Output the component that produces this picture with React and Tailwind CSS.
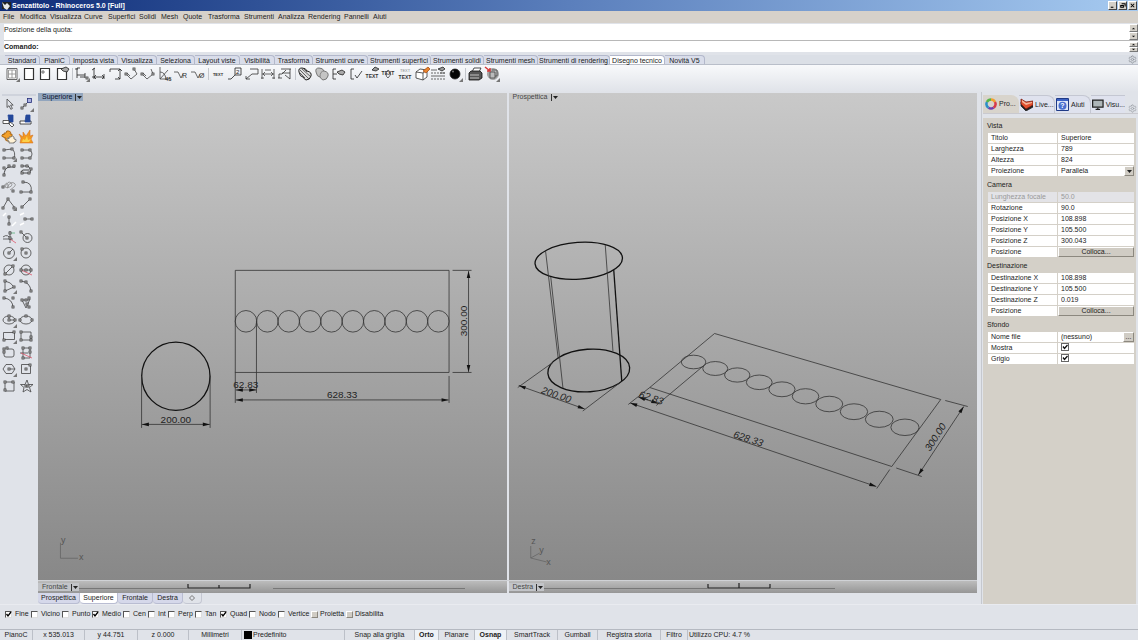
import React, { useState } from 'react';
import clsx from 'clsx';
import { Settings } from 'lucide-react';

const MENUS = [
  ['File', 'w-[17px]'], ['Modifica', 'w-[30px]'], ['Visualizza', 'w-[34px]'], ['Curve', 'w-[24px]'],
  ['Superfici', 'w-[31px]'], ['Solidi', 'w-[22px]'], ['Mesh', 'w-[22px]'], ['Quote', 'w-[25px]'],
  ['Trasforma', 'w-[36px]'], ['Strumenti', 'w-[34px]'], ['Analizza', 'w-[30px]'], ['Rendering', 'w-[36px]'],
  ['Pannelli', 'w-[29px]'], ['Aiuti', 'w-[18px]'],
];

const TOOL_TABS = [
  ['Standard', 'w-[35px]'], ['PianiC', 'w-[30px]'], ['Imposta vista', 'w-[48px]'], ['Visualizza', 'w-[39px]'],
  ['Seleziona', 'w-[38px]'], ['Layout viste', 'w-[45px]'], ['Visibilità', 'w-[35px]'], ['Trasforma', 'w-[38px]'],
  ['Strumenti curve', 'w-[55px]'], ['Strumenti superfici', 'w-[63px]'], ['Strumenti solidi', 'w-[53px]'],
  ['Strumenti mesh', 'w-[54px]'], ['Strumenti di rendering', 'w-[72px]'], ['Disegno tecnico', 'w-[55px]'],
  ['Novità V5', 'w-[40px]'],
];

const VIEW_TABS = [
  ['Prospettica', 'w-[42px]'], ['Superiore', 'w-[38px]'], ['Frontale', 'w-[35px]'], ['Destra', 'w-[30px]'],
];

const OSNAPS = [
  ['Fine', true, 'w-[26px]'], ['Vicino', false, 'w-[31px]'], ['Punto', false, 'w-[30px]'],
  ['Medio', true, 'w-[31px]'], ['Cen', false, 'w-[25px]'], ['Int', false, 'w-[20px]'],
  ['Perp', false, 'w-[27px]'], ['Tan', false, 'w-[25px]'], ['Quad', true, 'w-[29px]'],
  ['Nodo', false, 'w-[29px]'], ['Vertice', false, 'w-[33px]'],
];

const STATUS = [
  ['PianoC', 'w-[33px]'], ['x 535.013', 'w-[52px]'], ['y 44.751', 'w-[53px]'], ['z 0.000', 'w-[51px]'],
  ['Millimetri', 'w-[53px]'],
];

const MODES = [
  ['Snap alla griglia', 'w-[70px]'], ['Orto', 'w-[24px]', true], ['Planare', 'w-[36px]'], ['Osnap', 'w-[32px]', true],
  ['SmartTrack', 'w-[51px]'], ['Gumball', 'w-[40px]'], ['Registra storia', 'w-[63px]'], ['Filtro', 'w-[27px]'],
];

const PROPS = [
  { title: 'Vista', rows: [
    ['Titolo', 'Superiore'], ['Larghezza', '789'], ['Altezza', '824'], ['Proiezione', 'Parallela', 'select'],
  ] },
  { title: 'Camera', rows: [
    ['Lunghezza focale', '50.0', 'disabled'], ['Rotazione', '90.0'], ['Posizione X', '108.898'],
    ['Posizione Y', '105.500'], ['Posizione Z', '300.043'], ['Posizione', 'Colloca...', 'button'],
  ] },
  { title: 'Destinazione', rows: [
    ['Destinazione X', '108.898'], ['Destinazione Y', '105.500'], ['Destinazione Z', '0.019'],
    ['Posizione', 'Colloca...', 'button'],
  ] },
  { title: 'Sfondo', rows: [
    ['Nome file', '(nessuno)', 'file'], ['Mostra', '', 'check'], ['Grigio', '', 'check'],
  ] },
];

// d: outline, n: control points, more: filled corner for flyouts, extra: anything else
const Glyph = ({ d, n = [], more, extra, color = '#444' }) => (
  <svg viewBox="0 0 16 16" className="block size-4" fill="none" stroke={color} strokeWidth="0.8">
    {d && <path d={d} />}
    {extra}
    {n.map(([x, y]) => (
      <rect key={`${x}-${y}`} x={x - 1} y={y - 1} width="2" height="2" fill="#fff" stroke="#333" strokeWidth="0.8" />
    ))}
    {more && <path d="M12 16h4v-4z" fill="#777" stroke="none" />}
  </svg>
);

const RED = <path d="M3 8l11 5" stroke="#e0566a" />;
const word = (t, y, size = 5) => (
  <text x="8" y={y} textAnchor="middle" fontSize={size} fontWeight="bold" fill="#333" stroke="none" fontFamily="Liberation Sans, sans-serif">{t}</text>
);

const LEFT_TOOLS = [
  { name: 'Seleziona', g: { d: 'M6 3v8.500l2-1.800 1.800 3.600 1.600-.8-1.800-3.400h2.600z' } },
  { name: 'Punto', g: { d: 'M4 12l8-8', n: [[4, 12], [7, 9]], more: true, extra: <rect x="9.500" y="2.500" width="4" height="4" fill="#a9b0de" stroke="#26307c" /> } },
  { name: 'Tronca', g: { extra: <><path d="M7 2h5v7H8z" fill="#24489a" stroke="#24489a" /><path d="M2 7.500h6v3H2zM9 9l4 3-2 2-3-3z" fill="#fff" stroke="#333" /></> } },
  { name: 'Suddividi', g: { extra: <><path d="M2 8h11v3H2z" fill="#fff" stroke="#222" /><path d="M8 2h4v7H7z" fill="#24489a" stroke="#24489a" /></> } },
  { name: 'Unisci', g: { extra: <><path d="M3 4h2q0-3 3-2t1 3h2v5H8q1 3-2 2t-1-3H3V8Q0 8 1 6t2 0z" fill="#f4a12b" stroke="#9a5a10" /><path d="M8 8h2q1-2 3 0v2q3 0 2 2t-2 1v1H8v-2q-2 0-2-2t2 0z" fill="#fff2d5" stroke="#666" /></> } },
  { name: 'Esplodi', g: { extra: <><path d="M1 5l4 3V3l3 4 4-6v6l3-1-2 4 2 4H2l1-5z" fill="#f39a1f" stroke="#d0661a" strokeWidth="0.5" /><path d="M4 13l1-3 2 1 2-4 1 4 3-1-2 3z" fill="#fbd04a" stroke="none" /></> } },
  { name: 'Curva', g: { d: 'M3 4l8-1q4 3 2 9M3 12l9 0', n: [[3, 4], [3, 12], [11, 3], [13, 12]], more: true } },
  { name: 'Curva per punti', g: { d: 'M4 4h8q4 4 0 8H4', n: [[4, 4], [4, 12], [12, 4], [12, 12]] } },
  { name: 'Curva manico', g: { d: 'M3 14q0-8 5-9h6', n: [[3, 6], [3, 13], [8, 4], [13, 4]], color: '#222' } },
  { name: 'Curva chiusa', g: { d: 'M4 4h6q4 3 2 7H4q-2-2 1-3h6', n: [[4, 4], [9, 4], [13, 7], [4, 11], [11, 11]], color: '#222' } },
  { name: 'Elica', g: { d: 'M3 7q3-5 4-1t-3 2q3-7 6-4t-4 5q3-7 7-5t-4 7', n: [[2, 8], [12, 12]], color: '#888' } },
  { name: 'Conica', g: { d: 'M5 3q10 0 8 10H4', n: [[5, 3], [3, 13], [13, 13]] } },
  { name: 'Polilinea', g: { d: 'M2 13l5-9 7 9', n: [[2, 13], [7, 4], [13, 13]], more: true } },
  { name: 'Linea', g: { d: 'M4 12l8-8', n: [[4, 12], [12, 4]] } },
  { name: 'Linea verticale', g: { d: 'M8 5v7', n: [[8, 5], [8, 12]], extra: <path d="M2 4l3-3M11 14l4-4" stroke="#fff" strokeWidth="1.500" /> } },
  { name: 'Linea bisettrice', g: { d: 'M7 7h7', n: [[7, 7], [14, 7]], extra: <path d="M2 3l4-2M2 13l4-2" stroke="#fff" strokeWidth="1.500" /> } },
  { name: 'Normale', g: { d: 'M2 8q5-4 8 3M9 2v12M2 10h10', n: [[9, 4], [9, 9]], extra: <><path d="M9 4h5" stroke="#5cae78" /><path d="M9 10l6 4" stroke="#e0566a" /></> } },
  { name: 'Tangente', g: { d: 'M3 3l6 6M14 9a4.500 4.500 0 1 1-9 0a4.500 4.500 0 1 1 9 0', n: [[3, 3], [9, 9]] } },
  { name: 'Cerchio', g: { d: 'M13.500 8a5.500 5.500 0 1 1-11 0a5.500 5.500 0 1 1 11 0M8 8l4-4', n: [[8, 8]], more: true } },
  { name: 'Cerchio verticale', g: { d: 'M13 8a5 5 0 1 1-10 0a5 5 0 1 1 10 0', n: [[8, 8], [4, 4]] } },
  { name: 'Cerchio diametro', g: { d: 'M13 8a5 5 0 1 1-10 0a5 5 0 1 1 10 0M4 12l8-8', n: [[4, 12], [12, 4]] } },
  { name: 'Cerchio tangente', g: { d: 'M13 8a5 5 0 1 1-10 0a5 5 0 1 1 10 0M2 8h12', n: [[3, 8], [8, 8], [13, 8]], extra: RED } },
  { name: 'Arco', g: { d: 'M4 13V3q6 1 9 6z', n: [[4, 3], [4, 13], [13, 9]], more: true } },
  { name: 'Arco 3 punti', g: { d: 'M3 3q9 1 10 10', n: [[3, 3], [8, 4], [13, 13]] } },
  { name: 'Arco direzione', g: { d: 'M3 3q9 1 9 10', n: [[3, 3], [12, 3], [12, 12]] } },
  { name: 'Arco raggio', g: { d: 'M4 5l4 8 4-9M5 5h6', n: [[4, 5], [8, 5], [11, 3], [9, 9], [11, 12]] } },
  { name: 'Ellisse', g: { d: 'M14 8a6 4 0 1 1-12 0a6 4 0 1 1 12 0M8 4v4h6', n: [[8, 4], [8, 8], [14, 8]], more: true } },
  { name: 'Ellisse diametro', g: { d: 'M14 8a6 4 0 1 1-12 0a6 4 0 1 1 12 0', n: [[2, 8], [8, 4], [14, 8]] } },
  { name: 'Rettangolo', g: { d: 'M2.500 4.500h11v7h-11z', n: [[3, 12], [13, 4]], more: true } },
  { name: 'Rettangolo 3 punti', g: { d: 'M3 4h10v8H3z', n: [[3, 4], [3, 12], [13, 9], [13, 12]] } },
  { name: 'Rettangolo raccordato', g: { d: 'M6 4h5q2 0 2 2v4q0 2-2 2H5q-2 0-2-2V6', n: [[3, 4], [6, 3], [3, 7]] } },
  { name: 'Rettangolo verticale', g: { d: 'M5 3h7v10H5zM2 8h8', n: [[5, 3], [12, 3], [5, 13], [12, 7]], extra: RED } },
  { name: 'Poligono', g: { d: 'M5 3.500h6l3 4.500-3 4.500H5L2 8zM8 8h6', n: [[8, 8]], more: true } },
  { name: 'Poligono centro', g: { d: 'M3.500 3.500h9v9h-9z', n: [[8, 8], [12, 4]] } },
  { name: 'Poligono lato', g: { d: 'M4 4h9v9H4z', n: [[4, 4], [12, 4], [4, 12]] } },
  { name: 'Stella', g: { d: 'M9 2l1.500 4.500H15l-3.500 3 1.500 4.500-4-2.500-4 2.500 1-4.500-3.500-3h4.500z', n: [[8, 8], [10, 8]] } },
];

const PAGE = <path d="M3.500 2.500h9v11h-9z" fill="#fff" stroke="#333" strokeWidth="1.200" />;
const BLOB = 'M2 6q-1-4 3-4 4 0 5 3 5 1 4 5-1 4-5 4-2-1-3-3-3 0-4-5z';

const TOOL_GROUPS = [
  ['w-[66px]', [
    { name: 'Layout', g: { extra: <><path d="M3 2.500h10v11H3z" fill="#fff" /><path d="M4.500 4h7v8h-7zM8 4v8M4.500 8h7" stroke="#888" /></>, more: true } },
    { name: 'Nuovo layout', g: { extra: PAGE } },
    { name: 'Dettaglio', g: { extra: <>{PAGE}<path d="M6 4v4M4 6h4" stroke="#555" /></> } },
    { name: 'Proprietà layout', g: { extra: <>{PAGE}<path d="M7 3l5-2 3 2-2 3-4-1z" fill="#aaa" stroke="#222" /></> } },
  ]],
  ['w-[132px]', [
    { name: 'Quota', g: { d: 'M6 2H3v7h8V7M3 9v3M11 9v3M1 3h3M6 11h5', n: [[13, 12]], more: true, color: '#222' } },
    { name: 'Quota orizzontale', g: { d: 'M3 2v11M1 11h12M13 8v5M1 4l3-2M5 9l-2 2 2 2M11 9l2 2-2 2', color: '#222' } },
    { name: 'Quota verticale', g: { d: 'M3 3h10v10M3 3v3M8 13h5M11 5l2-2 2 2M11 11l2 2', color: '#222' } },
    { name: 'Quota allineata', g: { d: 'M2 8l5 5 6-5-3-5M3 7l3 3', n: [[2, 8], [10, 3]] } },
    { name: 'Quota ruotata', g: { d: 'M2 8l5 5 6-5-2-5M3 7l3 3', n: [[2, 8], [13, 8]] } },
    { name: 'Quota angolare', g: { d: 'M3 1v12h11M3 13L11 4M3 6q5 0 6 7', extra: <text x="8" y="15" fontSize="6" fill="#222" stroke="none">45</text> } },
    { name: 'Quota raggio', g: { d: 'M1 6h4l3 6 2-4', extra: <text x="9" y="12" fontSize="7" fill="#333" stroke="none">R</text> } },
    { name: 'Quota diametro', g: { d: 'M1 6h4l3 6 2-4', extra: <text x="9" y="12" fontSize="7" fill="#333" stroke="none">Ø</text> } },
  ]],
  ['w-[83px]', [
    { name: 'Testo', g: { extra: word('TEXT', 10, 4) } },
    { name: 'Direttrice', g: { d: 'M1 13h3l4-4M8 2h6v7H8z', extra: <text x="9" y="8" fontSize="6" fill="#222" stroke="none">2</text>, color: '#222' } },
    { name: 'Nota', g: { d: 'M6 3h8v5H8l-6 5M2 10v3h4', color: '#333' } },
    { name: 'Quota lineare', g: { d: 'M2 3v10M14 3v10M2 8h12M1 12h3M12 12h3M5 6L3 8l2 2M11 6l2 2-2 2M5 4h6', color: '#444' } },
    { name: 'Quota ordinata', g: { d: 'M4 3h10M5 7h8M2 12V8h3l4-4M8 9l5 4M13 3v10M1 12h4', color: '#333' } },
  ]],
  ['w-[166px]', [
    { name: 'Tratteggio', g: { extra: <><path d={BLOB} fill="#ddd" stroke="#222" strokeWidth="1" /><path d="M3 4l9 9M5 3l9 8M3 7l5 5M7 3l3 3" stroke="#444" /></> } },
    { name: 'Tratteggio pieno', g: { extra: <><path d={BLOB} fill="#c4c4c4" stroke="#777" strokeWidth="1" /><path d="M10 5q-4 0-4 6" stroke="#777" /></> } },
    { name: 'Modifica quota', g: { d: 'M6 3H3v10h3M3 8h4', extra: <path d="M7 6l5-2 3 2-2 3-4-1z" fill="#aaa" stroke="#222" />, color: '#222' } },
    { name: 'Verifica quota', g: { d: 'M7 3H4v10h3M8 9l2 3 5-7', color: '#222' } },
    { name: 'Modifica testo', g: { extra: <>{word('TEXT', 12)}<path d="M8 4l3-3 4 2-3 2z" fill="#999" stroke="#222" /></> } },
    { name: 'Testo lungo curva', g: { extra: <>{word('TEXT', 9)}<path d="M8 4q5 3 0 8q-4-3 0-8" /></> } },
    { name: 'Sostituisci testo', g: { extra: <><text x="3" y="6" fontSize="4" fill="#888" stroke="none">TEXT</text>{word('TEXT', 13)}</> } },
    { name: 'Disegno 2D', g: { extra: <><path d="M2 6l4-3 7 1v7l-4 3-7-2zM2 6l7 1v7M9 7l4-3" fill="#fff" stroke="#333" /><path d="M9 5l5-4 2 2-4 4z" fill="#e8842c" stroke="#a8501a" /></> } },
    { name: 'Tipi di linea', g: { d: 'M1 4h6M10 7h5M1 10h14', extra: <><path d="M1 7h14M1 13h14" strokeDasharray="2 1" /><path d="M8 3l5-2 2 2-3 2z" fill="#999" stroke="#222" /></> } },
    { name: 'Ombreggia', g: { extra: <><circle cx="8" cy="8" r="5" fill="#050505" stroke="#222" /><circle cx="6" cy="5.500" r="1" fill="#777" stroke="none" /></>, more: true } },
  ]],
  ['w-[33px]', [
    { name: 'Stampa', g: { extra: <><path d="M5 6l2-4h7l-2 4z" fill="#fff" stroke="#222" /><path d="M2 7l2-2h9l2 2v5l-3 2H2z" fill="#555" stroke="#111" /><path d="M3 9h9M3 12h9" stroke="#ddd" /></> } },
    { name: 'Blocco', g: { extra: <><circle cx="9" cy="8" r="5.500" fill="#aaa" stroke="#999" /><path d="M6 6h5v6H6zM8 4h5v6h-2" fill="#bbb" stroke="#444" /><path d="M1 1l5 4M6 2v3H3" stroke="#d63a3a" strokeWidth="1.500" /></>, more: true } },
  ]],
];

const ToolButton = ({ tool }) => (
  <button type="button" title={tool.name} aria-label={tool.name} className="size-4 shrink-0">
    <Glyph {...tool.g} />
  </button>
);

const Caret = ({ className = '' }) => (
  <svg viewBox="0 0 5 3" className={clsx('h-[3px] w-[5px]', className)}><path d="M0 0h5L2.500 3z" fill="#222" /></svg>
);

const TitleBar = () => (
  <header className="flex h-[11px] shrink-0 items-center gap-px bg-linear-to-r from-[#0f2c78] via-[#5b7fbc] to-[#a6caf0] pl-[2px] pr-px text-white">
    <svg viewBox="0 0 9 9" className="size-[9px]">
      <path d="M0 1h9v7H0z" fill="#222" />
      <path d="M0 1l3 3 2-2 3 3-3 4-3-2z" fill="#e8e8e8" />
    </svg>
    <h1 className="grow whitespace-nowrap text-[7px] font-bold leading-[11px]">Senzatitolo - Rhinoceros 5.0 [Full]</h1>
    <div className="flex gap-px">
      {[['Riduci', 'M2 6h3'], ['Ripristina', 'M3 2h4v3M2 4h3v2H2z'], ['Chiudi', 'M2 2l4 4M6 2L2 6']].map(([label, d]) => (
        <button key={label} type="button" aria-label={label} className="h-[9px] w-[9px] border border-b-[#444] border-l-white border-r-[#444] border-t-white bg-[#d4d0c8]">
          <svg viewBox="0 0 8 8" className="size-full" fill="none" stroke="#000" strokeWidth="1.200"><path d={d} /></svg>
        </button>
      ))}
    </div>
  </header>
);

const MenuBar = () => (
  <nav className="flex h-[12px] shrink-0 bg-[#d6d1ca] pl-[3px]">
    {MENUS.map(([label, w]) => (
      <button key={label} type="button" className={clsx('shrink-0 whitespace-nowrap text-left leading-[12px]', w)}>{label}</button>
    ))}
  </nav>
);

const ScrollArrows = ({ size }) => (
  <div className="flex w-[9px] flex-col bg-[#d4d0c8]">
    {['M1 4l2-2 2 2z', 'M1 2l2 2 2-2z'].map((d, i) => (
      <button key={d} type="button" aria-label={i ? 'Scorri giù' : 'Scorri su'} className={clsx('flex items-center justify-center border border-b-[#777] border-l-white border-r-[#777] border-t-white', size)}>
        <svg viewBox="0 0 6 6" className="size-[5px]"><path d={d} fill="#111" /></svg>
      </button>
    ))}
  </div>
);

const CommandArea = () => (
  <section className="shrink-0 bg-[#e0e3e9] pb-[3px] pl-1 pt-px">
    <div className="flex h-[17px] justify-between border-b border-[#b8b8b8] bg-white">
      <p className="leading-[12px]">Posizione della quota:</p>
      <ScrollArrows size="h-2" />
    </div>
    <div className="flex h-[11px] items-center bg-white">
      <label htmlFor="cmd" className="font-bold">Comando:</label>
      <input id="cmd" className="h-[10px] min-w-0 grow px-1 outline-none" />
      <ScrollArrows size="h-[5px]" />
    </div>
  </section>
);

const Toolbars = () => {
  const [active, setActive] = useState('Disegno tecnico');
  return (
    <section className="shrink-0">
      <div className="flex h-[10px] items-end border-b border-[#b9bec9] bg-[#dbdfe6] pl-[5px] pr-px">
        {TOOL_TABS.map(([label, w]) => (
          <button
            key={label}
            type="button"
            onClick={() => setActive(label)}
            className={clsx(
              'h-[9px] shrink-0 whitespace-nowrap rounded-tr-[4px] border-r border-t border-[#b3b8cb] text-center leading-[9px]',
              w,
              active === label ? 'bg-white' : 'bg-[#d9ddea]',
            )}
          >
            {label}
          </button>
        ))}
        <Settings className="ml-auto size-[9px] text-[#8b8f96]" strokeWidth={2} />
      </div>
      <div className="flex h-[27px] items-start gap-1 bg-linear-to-b from-[#f8f9fb] to-[#e0e3e9] pl-1">
        {TOOL_GROUPS.map(([w, tools], i) => (
          <div key={w} className={clsx('relative flex shrink-0 justify-between pt-px', w)}>
            {i > 0 && <span className="absolute -left-[2px] top-[3px] h-3 w-px bg-[#c3c6cc]" />}
            {tools.map((t) => <ToolButton key={t.name} tool={t} />)}
          </div>
        ))}
      </div>
    </section>
  );
};

// dimension arrow head, pointing along the given angle
const Tip = ({ x, y, a }) => (
  <path d="M0 0L-7-1.800V1.800z" transform={`translate(${x} ${y}) rotate(${a})`} fill="#111" stroke="none" />
);

const Dim = ({ from, to }) => {
  const a = (Math.atan2(to[1] - from[1], to[0] - from[0]) * 180) / Math.PI;
  return (
    <>
      <path d={`M${from}L${to}`} />
      <Tip x={to[0]} y={to[1]} a={a} />
      <Tip x={from[0]} y={from[1]} a={a + 180} />
    </>
  );
};

const Measure = ({ x, y, a = 0, italic, children }) => (
  <text
    transform={`translate(${x} ${y}) rotate(${a})`}
    textAnchor="middle"
    fontSize="10"
    fontStyle={italic ? 'italic' : 'normal'}
    fill="#222"
    stroke="none"
  >
    {children}
  </text>
);

const TopDrawing = () => (
  <svg viewBox="38 93 469 487" className="block size-full" fill="none" stroke="#333" strokeWidth="0.8" fontFamily="Liberation Sans, sans-serif">
    <circle cx="176" cy="376.300" r="34.200" stroke="#111" strokeWidth="1.300" />
    <path d="M141.700 376V428M210.300 376V428" />
    <Dim from={[142, 424.500]} to={[210, 424.500]} />
    <Measure x={176} y={423}>200.00</Measure>
    <path d="M235.500 270.300H449.500V372.500H235.500z" />
    {Array.from({ length: 10 }, (_, i) => (
      <circle key={i} cx={246.200 + i * 21.400} cy="321.300" r="10.800" />
    ))}
    <path d="M235.500 372V403M256.700 321V393M449.500 376V403M453 270.300H472M453 372.500H472" />
    <Dim from={[236, 390]} to={[256.500, 390]} />
    <Dim from={[236, 400]} to={[449, 400]} />
    <Dim from={[469, 271]} to={[469, 372]} />
    <Measure x={246} y={388}>62.83</Measure>
    <Measure x={342.500} y={398}>628.33</Measure>
    <Measure x={467.500} y={321} a={-90}>300.00</Measure>
    <path d="M60.500 543v15.500H78" stroke="#666" />
    <g fill="#555" stroke="none" fontSize="9">
      <text x="61" y="543">y</text>
      <text x="79" y="560">x</text>
    </g>
  </svg>
);

const DISCS = [
  [693.300, 362], [715, 368.500], [737, 375], [759, 382.300], [781.700, 389.300],
  [805.300, 396.300], [829, 404], [853.700, 411.700], [879, 419.300], [904.700, 427.300],
];

const PerspectiveDrawing = () => (
  <svg viewBox="509 93 468 487" className="block size-full" fill="none" stroke="#333" strokeWidth="0.8" fontFamily="Liberation Sans, sans-serif">
    <g stroke="#111" strokeWidth="1.300">
      <ellipse cx="578.500" cy="260.800" rx="43.800" ry="18.400" transform="rotate(-4 578.500 260.800)" />
      <ellipse cx="588.500" cy="370.500" rx="41" ry="21.300" transform="rotate(-4 588.500 370.500)" />
      <path d="M613.500 270L621.500 381" />
    </g>
    <path d="M545.300 251L558 359M550.500 277L562.700 388M605 245L612.700 351" />
    <path d="M552.500 362.500L517.500 387.500M620 382.500L582.500 411" />
    <Dim from={[518.500, 385.500]} to={[584.500, 409]} />
    <Measure x={555} y={398} a={19} italic>200.00</Measure>
    <path d="M714.300 333.500L940.500 399.500L891.500 466.500L649.500 387.500z" />
    <path d="M649.500 387.500L628 404.500M889.500 469.500L876.500 488.500M703 366L656 405.500" />
    <path d="M945 400.500L967.500 406.500M896 468L921.500 476.500" />
    {DISCS.map(([x, y], i) => (
      <ellipse key={x} cx={x} cy={y} rx={12.300 + i * 0.200} ry={6.800 + i * 0.160} />
    ))}
    <Dim from={[638, 397]} to={[658, 403.500]} />
    <Dim from={[630, 403]} to={[876, 486.500]} />
    <Dim from={[963.500, 406.500]} to={[918, 475]} />
    <Measure x={650} y={401} a={18} italic>62.83</Measure>
    <Measure x={747} y={442} a={18} italic>628.33</Measure>
    <Measure x={938} y={439} a={-57} italic>300.00</Measure>
    <path d="M530.500 546v12l16 4M530.500 558l9-5" stroke="#666" />
    <g fill="#555" stroke="none" fontSize="9">
      <text x="531" y="544">z</text>
      <text x="539" y="553">y</text>
      <text x="546" y="565">x</text>
    </g>
  </svg>
);

const ViewTitle = ({ label, active }) => (
  <button
    type="button"
    className={clsx('flex h-2 items-center gap-[3px] pl-1 pr-px leading-[8px]', active ? 'bg-[#92a5bd] text-[#0a1430]' : 'text-[#444]')}
  >
    <span>{label}</span>
    <span className="flex h-[7px] items-center border-l border-[#333] pl-px"><Caret /></span>
  </button>
);

const Viewport = ({ label, active, children }) => (
  <section className="relative min-h-0 min-w-0 grow basis-0 bg-linear-to-b from-[#c9c9c9] to-[#888888]">
    {children}
    <div className="absolute left-0 top-0"><ViewTitle label={label} active={active} /></div>
  </section>
);

const Strip = ({ label, children }) => (
  <section className="flex min-w-0 grow basis-0 items-center bg-linear-to-b from-[#bcbcbc] to-[#969696]">
    <div className="bg-[#c2c4c8]"><ViewTitle label={label} /></div>
    <svg viewBox="0 0 420 12" className="h-3 w-[420px]" fill="none">{children}</svg>
  </section>
);

const PanelTabs = () => (
  <div className="flex h-[19px] shrink-0 items-end border-b border-[#c9c9cf]">
    <button type="button" className="flex h-[18px] w-[36px] items-center gap-[2px] rounded-tr-[8px] bg-[#d8d4cc] pl-[2px]">
      <svg viewBox="0 0 12 12" className="size-3" fill="none" strokeWidth="2.500">
        <path d="M6 1.500A4.500 4.500 0 0 1 10 4" stroke="#f0a030" />
        <path d="M10 4A4.500 4.500 0 0 1 8.500 9.700" stroke="#d83a4a" />
        <path d="M8.500 9.700A4.500 4.500 0 0 1 3.500 9.700" stroke="#6a3fb0" />
        <path d="M3.500 9.700A4.500 4.500 0 0 1 2 4" stroke="#2d8fc8" />
        <path d="M2 4A4.500 4.500 0 0 1 6 1.500" stroke="#57b548" />
      </svg>
      Pro...
    </button>
    <button type="button" className="flex h-[18px] w-[36px] items-center gap-[2px] rounded-tr-[8px] border-r border-t border-[#c4c7d2] bg-[#dfe2ee] pl-px">
      <svg viewBox="0 0 13 13" className="size-[13px]" strokeWidth="0.8">
        <path d="M1 4l5 5 7-3v3l-7 4-5-5z" fill="#222" stroke="#222" />
        <path d="M1 1l5 3 7-1v4l-7 4-5-5z" fill="#e2502e" stroke="#7a1c10" />
        <path d="M2 2l4 3 6-1v1L6 7 2 4z" fill="#f7b49a" stroke="none" />
      </svg>
      Live...
    </button>
    <button type="button" className="flex h-[18px] w-[36px] items-center gap-[2px] rounded-tr-[8px] border-r border-t border-[#c4c7d2] bg-[#dfe2ee] pl-px">
      <svg viewBox="0 0 13 13" className="size-[13px]">
        <path d="M.5.500h12v12H.5z" fill="#dfe6f6" stroke="#1f3a86" />
        <path d="M1 2h11" stroke="#3d62c4" strokeWidth="2" />
        <circle cx="6.500" cy="7.800" r="4" fill="#4a6fd0" />
        <text x="6.500" y="10.300" fontSize="7" fontWeight="bold" textAnchor="middle" fill="#fff">?</text>
      </svg>
      Aiuti
    </button>
    <button type="button" className="flex h-[18px] w-[34px] items-center gap-[2px] border-t border-[#c4c7d2] bg-[#dfe2ee] pl-px">
      <svg viewBox="0 0 13 13" className="size-[13px]" stroke="#222">
        <path d="M.7 1.500h11.600v8H.7z" fill="#aeb6b8" strokeWidth="1.400" />
        <path d="M4 12h5M6.500 10v2" strokeWidth="1.400" />
      </svg>
      Visu...
    </button>
    <Settings className="ml-auto mr-px size-[9px] shrink-0 text-[#9a9da4]" />
  </div>
);

const bevel = 'border border-b-[#8c887f] border-l-white border-r-[#8c887f] border-t-white bg-[#d0ccc4]';

const PropValue = ({ id, value, kind }) => {
  if (kind === 'button') {
    return <button id={id} type="button" className={clsx('block h-[10px] w-full text-center leading-[8px]', bevel)}>{value}</button>;
  }
  if (kind === 'check') {
    return (
      <span className="relative block size-2">
        <input id={id} type="checkbox" defaultChecked className="peer block size-2 appearance-none border border-[#666] bg-white" />
        <svg viewBox="0 0 8 8" className="pointer-events-none absolute inset-0 hidden size-2 peer-checked:block" fill="none" stroke="#111" strokeWidth="1.300"><path d="M2 3.500l1.500 2L6.500 2" /></svg>
      </span>
    );
  }
  if (kind === 'select') {
    return (
      <span className="relative flex">
        <select id={id} defaultValue={value} className="h-[10px] w-full appearance-none leading-[10px] outline-none">
          <option>Parallela</option>
          <option>Prospettica</option>
        </select>
        <span className={clsx('pointer-events-none absolute right-0 top-0 flex h-[10px] w-[10px] items-center justify-center', bevel)}><Caret /></span>
      </span>
    );
  }
  return (
    <span className="flex">
      <input id={id} defaultValue={value} disabled={kind === 'disabled'} className="h-[10px] w-full min-w-0 leading-[10px] outline-none" />
      {kind === 'file' && <button type="button" aria-label="Sfoglia" className={clsx('h-[10px] w-[11px] shrink-0 leading-[4px]', bevel)}>...</button>}
    </span>
  );
};

const PropertiesPanel = () => (
  <aside className="flex w-[157px] shrink-0 flex-col border-l border-[#c5c8cf] bg-[#e0e3e9] pl-px pt-[3px]">
    <PanelTabs />
    <div className="mr-[2px] mt-1 grow bg-[#d4d0c8] pl-1 pr-[2px]">
      {PROPS.map((group) => (
        <fieldset key={group.title}>
          <legend className="block h-[15px] leading-[15px]">{group.title}</legend>
          {group.rows.map(([label, value, kind]) => {
            const id = `${group.title}-${label}`;
            return (
              <div key={label} className={clsx('ml-px flex h-[11px] border-b border-[#d4d0c8]', kind === 'disabled' ? 'bg-[#e3e3e7] text-[#999]' : 'bg-white')}>
                <label htmlFor={id} className="w-[70px] shrink-0 border-r border-[#d4d0c8] pl-[3px] leading-[10px]">{label}</label>
                <div className={clsx('grow', kind === 'button' ? '' : 'pl-[3px]')}><PropValue id={id} value={value} kind={kind} /></div>
              </div>
            );
          })}
        </fieldset>
      ))}
    </div>
  </aside>
);

const OsnapBar = () => (
  <div className="flex h-[25px] shrink-0 items-start border-t border-[#e9ebf0] pl-[5px] pt-1">
    {OSNAPS.map(([label, on, w]) => (
      <label key={label} className={clsx('flex h-[10px] shrink-0 items-center gap-[3px] whitespace-nowrap', w)}>
        <span className="relative block size-[7px] shrink-0">
          <input type="checkbox" defaultChecked={on} className="peer block size-[7px] appearance-none border border-b-[#ddd] border-l-[#555] border-r-[#ddd] border-t-[#555] bg-white" />
          <svg viewBox="0 0 7 7" className="pointer-events-none absolute inset-0 hidden size-[7px] peer-checked:block" fill="none" stroke="#000" strokeWidth="1.300"><path d="M1.500 3l1.500 2 3-4" /></svg>
        </span>
        {label}
      </label>
    ))}
    {['Proietta', 'Disabilita'].map((label) => (
      <button key={label} type="button" className="flex h-[10px] w-[35px] shrink-0 items-center gap-[2px]">
        <span className={clsx('size-[7px] shrink-0', bevel)} />
        {label}
      </button>
    ))}
  </div>
);

const StatusBar = () => (
  <footer className="flex h-[11px] shrink-0 border-t border-[#b5b9c1] leading-[10px]">
    {STATUS.map(([label, w]) => (
      <button key={label} type="button" className={clsx('shrink-0 whitespace-nowrap border-r border-[#bcc0c8] text-center', w)}>{label}</button>
    ))}
    <button type="button" className="flex w-[103px] shrink-0 items-center gap-px border-r border-[#bcc0c8] pl-[2px]">
      <span className="size-2 bg-black" />
      Predefinito
    </button>
    {MODES.map(([label, w, on]) => (
      <button key={label} type="button" className={clsx('shrink-0 whitespace-nowrap border-r border-[#bcc0c8] text-center', w, on && 'bg-[#eef2f7] font-bold')}>{label}</button>
    ))}
    <span className="grow whitespace-nowrap pl-px">Utilizzo CPU: 4.7 %</span>
  </footer>
);

const App = () => {
  const [view, setView] = useState('Superiore');

  return (
    <div className="flex h-screen flex-col overflow-hidden bg-[#e0e3e9] font-['Liberation_Sans',Arial,sans-serif] text-[7px] leading-[10px] text-[#222]">
      <TitleBar />
      <MenuBar />
      <CommandArea />
      <Toolbars />

      <main className="flex min-h-0 grow">
        <aside className="w-[38px] shrink-0 pt-[2px]">
          <div className="mx-[2px] h-[2px] bg-[#cfd3dc]" />
          <div className="grid h-[298px] grid-cols-[17px_17px] content-between pl-px">
            {LEFT_TOOLS.map((t) => <ToolButton key={t.name} tool={t} />)}
          </div>
        </aside>

        <div className="flex min-w-0 grow flex-col pt-px">
          <div className="flex min-h-0 grow gap-[2px]">
            <Viewport label="Superiore" active><TopDrawing /></Viewport>
            <Viewport label="Prospettica"><PerspectiveDrawing /></Viewport>
          </div>
          <div className="flex h-[13px] shrink-0 gap-[2px] border-t border-[#d0d2d6]">
            <Strip label="Frontale">
              <path d="M109 3v4h62V3M140 4v3" stroke="#222" strokeWidth="1.200" />
              <path d="M0 7.500h109M194 7.500h192" stroke="#777" />
            </Strip>
            <Strip label="Destra">
              <path d="M164 3v4h62V3M195 2v5" stroke="#222" strokeWidth="1.200" />
              <path d="M0 7.500h164M226 7.500h65" stroke="#777" />
            </Strip>
          </div>
          <div className="flex h-[11px] shrink-0">
            {VIEW_TABS.map(([label, w]) => (
              <button
                key={label}
                type="button"
                onClick={() => setView(label)}
                className={clsx(
                  'h-[11px] shrink-0 whitespace-nowrap rounded-b-[4px] border-b border-r border-[#b9bdd2]',
                  w,
                  view === label ? 'bg-white' : 'bg-[#d5d8ea]',
                )}
              >
                {label}
              </button>
            ))}
            <button type="button" aria-label="Nuova vista" className="flex h-[11px] w-[19px] items-center justify-center rounded-b-[4px] border-b border-r border-[#c4c7d2]">
              <svg viewBox="0 0 6 6" className="size-[6px]" fill="none" stroke="#777"><path d="M3 .5L5.500 3 3 5.500.5 3z" /></svg>
            </button>
          </div>
        </div>

        <div className="w-1 shrink-0" />
        <PropertiesPanel />
      </main>

      <OsnapBar />
      <StatusBar />
    </div>
  );
};

export default App;
